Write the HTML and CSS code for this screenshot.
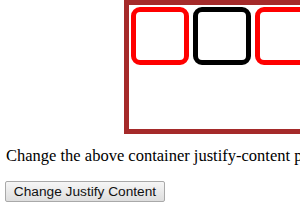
FILE: index.html
```html
<!DOCTYPE html>
<html lang="en">
<head>
  <meta charset="UTF-8" />
  <title>Justify Content</title>
  <link rel="stylesheet" href="styles.css">
</head>
<body>

  <div class="page">
    <div class="flex-container" id="flexBox">
      <div class="item"></div>
      <div class="item active"></div>
      <div class="item"></div>
      <div class="item"></div>
      <div class="item"></div>
    </div>

    <p class="note">Change the above container justify-content property value to see the effect.</p>

    <button id="changeBtn" class="change-btn">Change Justify Content</button>
  </div>

</body>
</html>
```

FILE: styles.css
```css
html, body {
  margin: 0;
  overflow: hidden;
}

body {
  font-family: "Liberation Serif", "Times New Roman", serif;
  font-size: 16.5px;
  color: #000;
  background: #fff;
}

.page {
  padding: 0 0 0 5px;
}

.flex-container {
  display: flex;
  justify-content: flex-start;
  align-items: flex-start;
  margin-left: 119px;
  width: 420px;
  height: 124px;
  border: 5px solid #a52a2a;
}

.item {
  width: 48px;
  height: 48px;
  margin: 2px;
  border: 5px solid red;
  border-radius: 9px;
  background: #fff;
  flex-shrink: 0;
}

.item.active {
  border-color: #000;
}

.note {
  margin: 12px 0 16px 1px;
  white-space: nowrap;
  line-height: 19px;
}

.change-btn {
  font-family: "Liberation Sans", Arial, sans-serif;
  font-size: 13.7px;
  color: #111;
  padding: 2px 6px;
  height: 21px;
  width: 160px;
  border: 1px solid #a9a9a9;
  border-radius: 2px;
  background: linear-gradient(#f6f6f6, #dedede);
}
```
